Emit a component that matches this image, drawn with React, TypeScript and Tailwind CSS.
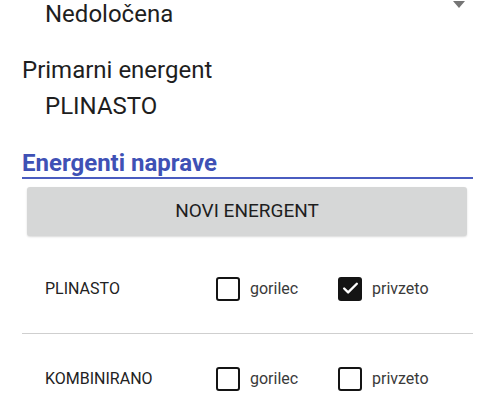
import { Check } from 'lucide-react';

const font = { fontFamily: 'Roboto, "Noto Sans", sans-serif' };

/**
 * Checkbox in the Android style: square outline, filled when checked
 */
function Box({ checked, label }: { checked: boolean; label: string }) {
  return (
    <div className="flex items-center gap-[10px]">
      {checked ? (
        <div className="w-[24px] h-[24px] rounded-[3px] bg-[#141414] flex items-center justify-center">
          <Check className="w-[19px] h-[19px] text-white" strokeWidth={3} />
        </div>
      ) : (
        <div className="w-[24px] h-[24px] rounded-[3px] border-[2.5px] border-[#141414]" />
      )}
      <span className="text-[16px] text-[#3a3a3a]">{label}</span>
    </div>
  );
}

function EnergyRow({ name, burner, preset }: { name: string; burner: boolean; preset: boolean }) {
  return (
    <div className="h-[89px] flex items-center">
      <div className="w-[194px] pl-[23px] text-[16px] text-[#222]">{name}</div>
      <div className="w-[122px]">
        <Box checked={burner} label="gorilec" />
      </div>
      <Box checked={preset} label="privzeto" />
    </div>
  );
}

export default function App() {
  return (
    <div className="w-[495px] h-[400px] overflow-hidden bg-white px-[22px]" style={font}>
      {/* Spinner */}
      <div className="relative h-[28px]">
        <div className="pl-[23px] text-[24px] leading-[28px] text-[#1e1e1e]">Nedoločena</div>
        <div className="absolute right-[8px] top-[1px] w-0 h-0 border-l-[6px] border-r-[6px] border-t-[7px] border-l-transparent border-r-transparent border-t-[#757575]" />
      </div>

      {/* Primary energy */}
      <div className="mt-[28px] text-[24px] leading-[28px] text-[#1e1e1e]">Primarni energent</div>
      <div className="mt-[8px] pl-[23px] text-[24px] leading-[28px] text-[#1e1e1e]">PLINASTO</div>

      {/* Section header */}
      <div className="mt-[29px] text-[24px] leading-[28px] font-bold text-[#3f51b5] border-b-2 border-[#4a5cc0]">
        Energenti naprave
      </div>

      <button className="mt-[8px] ml-[5px] mr-[6px] w-[440px] h-[49px] rounded-[3px] bg-[#d6d7d7] shadow-[0_1px_2px_rgba(0,0,0,0.15)] text-[19px] text-[#1e1e1e]">
        NOVI ENERGENT
      </button>

      <div className="mt-[8px]">
        <EnergyRow name="PLINASTO" burner={false} preset={true} />
        <div className="h-[1px] bg-[#cfcfcf]" />
        <EnergyRow name="KOMBINIRANO" burner={false} preset={false} />
      </div>
    </div>
  );
}
